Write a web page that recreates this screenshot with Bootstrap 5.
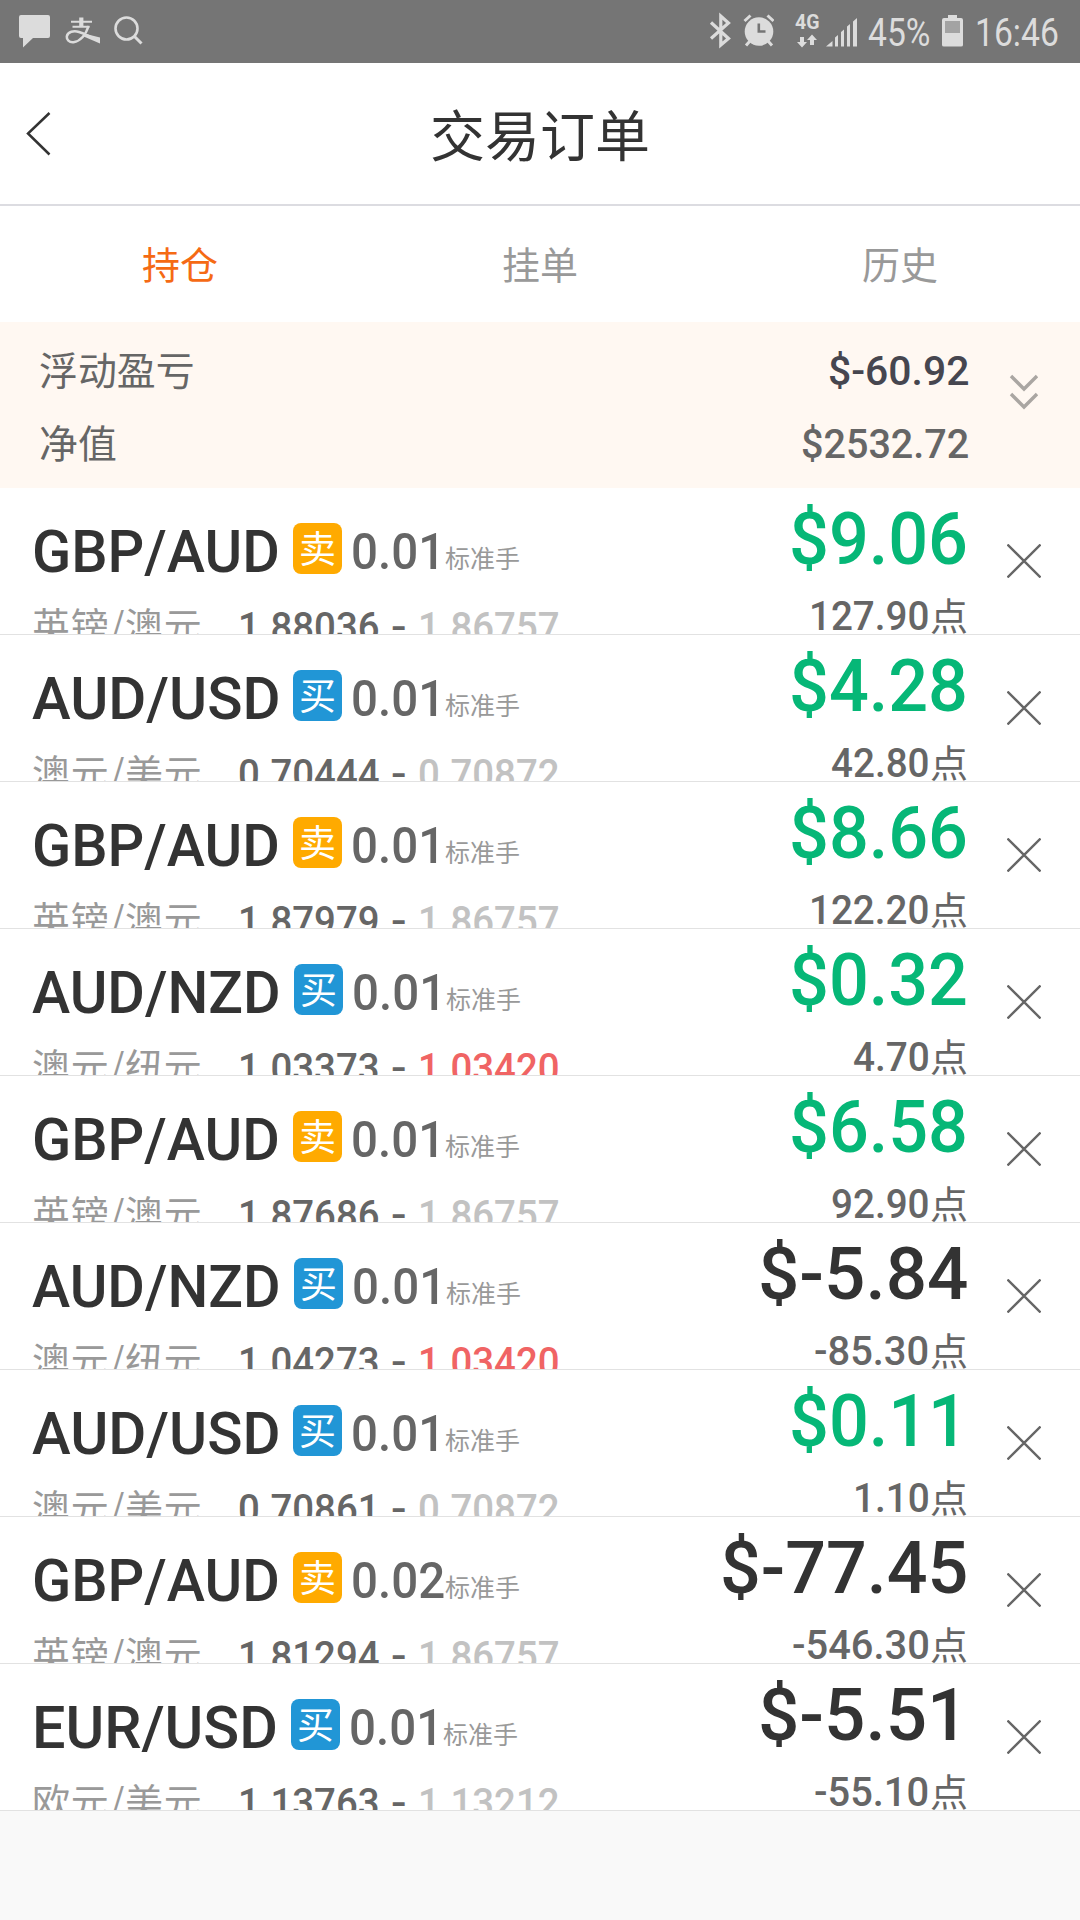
<!DOCTYPE html>
<html lang="zh-CN">
<head>
<meta charset="utf-8">
<meta name="viewport" content="width=device-width, initial-scale=1">
<title>交易订单</title>
<link href="https://cdn.jsdelivr.net/npm/bootstrap@5.3.0/dist/css/bootstrap.min.css" rel="stylesheet">
<style>
body{font-family:Roboto,"Noto Sans CJK SC",sans-serif;background:#f9f9f9;color:#333;width:1080px;overflow:hidden}
svg{display:block;flex:none}
.cn{font-family:"Noto Sans CJK SC",sans-serif;white-space:nowrap}
.status-bar{height:63px;background:#757575;color:#dcdcdc}
.status-bar .fit{font-size:38.5px;line-height:66px;font-weight:400}
.status-bar .net4g{width:23px;margin-left:21px;padding-top:14px}
.status-bar .net4g .fit{font-size:19.5px;line-height:18px;font-weight:700}
.title-bar{height:143px;border-bottom:2px solid #dcdce1}
.title-bar h1{font-size:55px;line-height:60px;color:#333;margin-top:-4px}
.back{left:26px;top:48px}
.tab-row{height:116px;font-size:38px}
.tab-row .nav-link{color:#999;padding:0;line-height:114px}
.tab-row .nav-link.active{color:#f56a14}
.summary{height:166px;background:#fff8f2;color:#666;padding:12px 0 0 39px}
.summary .line{height:73px}
.summary .cn{font-size:38.9px;line-height:68px}
.summary .fit{font-size:40px;line-height:75px}
.sum-values{width:930px}
.order{height:147px;border-bottom:1px solid #e2e2e2;overflow:hidden;padding-left:32px}
.fit{display:block;flex:none;white-space:nowrap;font-weight:500}
.fit>span{display:inline-block;transform-origin:0 50%}
.main-line{height:107px;padding-top:24px}
.pair{font-size:58.5px;line-height:80px;color:#333}
.side{width:49px;height:51px;border-radius:8px;margin:11px 9px 0 0;color:#fff;font-size:37px;line-height:49px;text-align:center;flex:none}
.sell{background:#fa0}
.buy{background:#2196d6}
.lots{font-size:50px;line-height:80px;color:#666}
.unit{font-size:25px;line-height:80px;color:#999;padding-top:5px}
.sub-line{height:60px}
.pair-cn{font-size:38px;line-height:57px;color:#999;width:206px;letter-spacing:.7px}
.price{font-size:40px;line-height:60px;color:#666;padding-top:3px}
.faint{color:#c2c2c2}
.down{color:#f06464}
.result{width:360px;padding-top:12px}
.amount{font-size:72px;line-height:80px;height:92px;color:#333}
.amount.gain{color:#06b777}
.points{color:#666;font-size:40px;line-height:50px}
.points .cn{font-size:38px;margin-top:-3px}
.close-btn{margin:56px 39px 0 39px}
</style>
<script src="https://cdn.jsdelivr.net/npm/bootstrap@5.3.0/dist/js/bootstrap.bundle.min.js"></script>
</head>
<body>
<div class="status-bar d-flex align-items-start">
  <svg width="150" height="63" viewBox="0 0 150 63" fill="#dcdcdc">
    <path d="M21 15h27a2 2 0 0 1 2 2v19a2 2 0 0 1-2 2H33L23 47.5V38h-2a2 2 0 0 1-2-2V17a2 2 0 0 1 2-2z"/>
    <g fill="none" stroke="#dcdcdc"><path d="M71 21.800h21M72.500 26.700h17" stroke-width="2"/><path d="M81.300 17.500v9" stroke-width="4.200"/><path d="M88.500 26C86 34 81 41 73.500 42.200C69 42.600 66.500 39.500 66.800 36.500C67.500 31.500 74 30.500 79 32C84 33.500 88 36 93 38" stroke-width="2.500"/></g>
    <path d="M84 33.500L100 37.500V43.500L82.500 36z"/>
    <g fill="none" stroke="#dcdcdc" stroke-width="2.600"><circle cx="126.500" cy="28.500" r="11"/><path d="M134.500 36.500l7 7" stroke-width="3"/></g>
  </svg>
  <svg class="ms-auto" width="65" height="63" viewBox="708 0 65 63" fill="#dcdcdc">
    <path d="M710 22.500l17.500 16L719.800 45V16l7.700 7L710 38.500" fill="none" stroke="#dcdcdc" stroke-width="3.200"/>
    <circle cx="758" cy="31.500" r="14.300"/>
    <path d="M743.500 21l6-5.500M772.500 21l-6-5.500M749 41l-4 4.500M767 41l4 4.500" stroke="#dcdcdc" stroke-width="3"/>
    <path d="M757.800 23.500v8h6.700" fill="none" stroke="#757575" stroke-width="2.600"/>
  </svg>
  <div class="net4g">
    <span class="fit" data-w="24">4G</span>
    <svg width="23" height="16" viewBox="0 0 23 16" fill="#dcdcdc"><path d="M5 5h4v5h3L7 15.500L2 10h3zM15 13h4V8h3L17 2.500L12 8h3z"/></svg>
  </div>
  <svg class="ms-2" width="31" height="63" viewBox="825 0 31 63" fill="#dcdcdc"><path d="M825 46.500l6.500-5.500v5.500zM834 37.500l3-2.500v11.500h-3zM840 32l3-2.500v17h-3zM846 26.500l3-2.500v22.500h-3zM852 21.500l4-3.500v28.500h-4z"/></svg>
  <span class="fit" data-w="62" style="margin-left:11px">45%</span>
  <svg width="21" height="63" viewBox="942 0 21 63" style="margin-left:12px" fill="#dcdcdc"><path d="M948 15h9v3h4q2 0 2 2v25q0 1.500-2 1.500h-17q-2 0-2-1.500V20q0-2 2-2h4z"/><path d="M945 21h15v12h-15z" fill="#a3a3a3"/></svg>
  <span class="fit" data-w="84" style="margin:0 21px 0 12px">16:46</span>
</div>

<header class="title-bar bg-white position-relative d-flex align-items-center justify-content-center">
  <svg class="back position-absolute" width="26" height="46" viewBox="0 0 26 46"><path d="M23.500 2L2 22.500L23.500 43.500" fill="none" stroke="#333" stroke-width="2.500"/></svg>
  <h1 class="cn mb-0 fw-normal">交易订单</h1>
</header>

<nav class="tab-row nav nav-justified bg-white cn">
  <a class="nav-link active" href="#">持仓</a>
  <a class="nav-link" href="#">挂单</a>
  <a class="nav-link" href="#">历史</a>
</nav>

<section class="summary d-flex">
  <div class="sum-values">
    <div class="line d-flex justify-content-between"><span class="cn">浮动盈亏</span><span class="fit" style="color:#46464f" data-w="141">$-60.92</span></div>
    <div class="line d-flex justify-content-between"><span class="cn">净值</span><span class="fit" data-w="168">$2532.72</span></div>
  </div>
  <svg width="30" height="40" viewBox="0 0 30 40" style="margin:39px 0 0 40px"><path d="M2 3l13 13L28 3M2 21l13 13L28 21" fill="none" stroke="#aaa6a2" stroke-width="3.400"/></svg>
</section>

<main id="orders" class="bg-white"></main>

<script>
const orders = [
  ['GBP/AUD', '英镑/澳元', 0, '0.01', '1.88036', '1.86757', 'faint', '$9.06', '127.90'],
  ['AUD/USD', '澳元/美元', 1, '0.01', '0.70444', '0.70872', 'faint', '$4.28', '42.80'],
  ['GBP/AUD', '英镑/澳元', 0, '0.01', '1.87979', '1.86757', 'faint', '$8.66', '122.20'],
  ['AUD/NZD', '澳元/纽元', 1, '0.01', '1.03373', '1.03420', 'down', '$0.32', '4.70'],
  ['GBP/AUD', '英镑/澳元', 0, '0.01', '1.87686', '1.86757', 'faint', '$6.58', '92.90'],
  ['AUD/NZD', '澳元/纽元', 1, '0.01', '1.04273', '1.03420', 'down', '$-5.84', '-85.30'],
  ['AUD/USD', '澳元/美元', 1, '0.01', '0.70861', '0.70872', 'faint', '$0.11', '1.10'],
  ['GBP/AUD', '英镑/澳元', 0, '0.02', '1.81294', '1.86757', 'faint', '$-77.45', '-546.30'],
  ['EUR/USD', '欧元/美元', 1, '0.01', '1.13763', '1.13212', 'faint', '$-5.51', '-55.10']
];
// Width of a figure: digits, point, dollar sign and minus each have a fixed advance.
const figure = (text, digit, dot, dollar, minus) =>
  [...text].reduce((w, c) => w + (c === '.' ? dot : c === '$' ? dollar : c === '-' ? minus : digit), 0);
const pairWidth = {'GBP/AUD': 248, 'AUD/USD': 248, 'AUD/NZD': 249, 'EUR/USD': 246};

document.getElementById('orders').innerHTML = orders.map(([pair, name, buy, lots, open, now, tone, amount, points]) => `
<article class="order d-flex">
  <div class="flex-grow-1">
    <div class="main-line d-flex">
      <span class="fit pair" data-w="${pairWidth[pair]}" style="margin-right:13px">${pair}</span>
      <span class="side cn ${buy ? 'buy' : 'sell'}">${buy ? '买' : '卖'}</span>
      <span class="fit lots" data-w="94">${lots}</span>
      <span class="unit cn">标准手</span>
    </div>
    <div class="sub-line d-flex">
      <span class="pair-cn cn">${name}</span>
      <span class="fit price" data-w="142">${open}</span>
      <span class="fit price" data-w="16" style="margin:0 11px">-</span>
      <span class="fit price ${tone}" data-w="142">${now}</span>
    </div>
  </div>
  <div class="result d-flex flex-column align-items-end">
    <div class="amount flex-shrink-0 ${amount.includes('-') ? '' : 'gain'}"><span class="fit" data-w="${figure(amount, 38, 20.3, 45, 31)}">${amount}</span></div>
    <div class="points d-flex flex-shrink-0"><span class="fit" data-w="${figure(points, 22, 10.5, 0, 17)}">${points}</span><span class="cn">点</span></div>
  </div>
  <svg class="close-btn" width="34" height="34" viewBox="0 0 34 34"><path d="M.5 .5l33 33M33.500 .5l-33 33" stroke="#666" stroke-width="2.300"/></svg>
</article>`).join('');

// Condense each figure to its column width.
document.querySelectorAll('.fit').forEach(el => {
  const span = document.createElement('span');
  span.textContent = el.textContent;
  el.replaceChildren(span);
  span.style.transform = `scaleX(${el.dataset.w / span.offsetWidth})`;
  el.style.width = el.dataset.w + 'px';
});
</script>
</body>
</html>
